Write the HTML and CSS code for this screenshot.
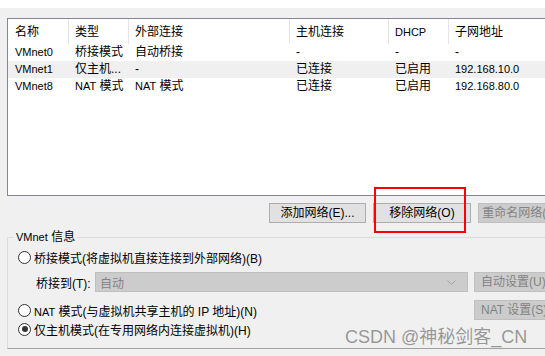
FILE: index.html
```html
<!DOCTYPE html>
<html lang="zh-CN">
<head>
  <meta charset="UTF-8">
  <meta name="viewport" content="width=device-width, initial-scale=1.0">
  <title>虚拟网络编辑器</title>
  <link rel="stylesheet" href="styles.css">
</head>
<body>
  <div class="topbar"></div>

  <div class="list">
    <div class="row head">
      <div class="cell">名称</div>
      <div class="cell">类型</div>
      <div class="cell">外部连接</div>
      <div class="cell">主机连接</div>
      <div class="cell"><span class="lat">DHCP</span></div>
      <div class="cell">子网地址</div>
    </div>
    <div class="row">
      <div class="cell lat">VMnet0</div>
      <div class="cell">桥接模式</div>
      <div class="cell">自动桥接</div>
      <div class="cell">-</div>
      <div class="cell">-</div>
      <div class="cell">-</div>
    </div>
    <div class="row alt">
      <div class="cell lat">VMnet1</div>
      <div class="cell">仅主机...</div>
      <div class="cell">-</div>
      <div class="cell">已连接</div>
      <div class="cell">已启用</div>
      <div class="cell lat">192.168.10.0</div>
    </div>
    <div class="row">
      <div class="cell lat">VMnet8</div>
      <div class="cell"><span class="lat">NAT</span> 模式</div>
      <div class="cell"><span class="lat">NAT</span> 模式</div>
      <div class="cell">已连接</div>
      <div class="cell">已启用</div>
      <div class="cell lat">192.168.80.0</div>
    </div>
  </div>

  <div class="actions">
    <button class="btn">添加网络(E)...</button>
    <button class="btn wide">移除网络(O)</button>
    <button class="btn wide" disabled>重命名网络(W)...</button>
  </div>

  <div class="group">
    <div class="group-title"><span class="lat">VMnet</span> 信息</div>

    <label class="option first">
      <span class="radio"></span>
      <span>桥接模式(将虚拟机直接连接到外部网络)(B)</span>
    </label>

    <div class="bridge">
      <span class="bridge-label">桥接到(T):</span>
      <div class="select">
        <span>自动</span>
        <svg width="9" height="5" viewBox="0 0 9 5"><polyline points="0.5,0.5 4.5,4.5 8.5,0.5" fill="none" stroke="#a3a3a3" stroke-width="1"/></svg>
      </div>
      <button class="btn side" disabled>自动设置(U)...</button>
    </div>

    <div class="option nat">
      <label class="option-text">
        <span class="radio"></span>
        <span><span class="lat">NAT</span> 模式(与虚拟机共享主机的 IP 地址)(N)</span>
      </label>
      <button class="btn side" disabled>NAT 设置(S)...</button>
    </div>

    <label class="option">
      <span class="radio checked"></span>
      <span>仅主机模式(在专用网络内连接虚拟机)(H)</span>
    </label>
  </div>

  <div class="highlight"></div>
  <div class="watermark">CSDN @神秘剑客_CN</div>
</body>
</html>
```

FILE: styles.css
```css
html, body {
  margin: 0;
  padding: 0;
}

body {
  width: 545px;
  height: 356px;
  overflow: hidden;
  position: relative;
  background-color: #f0f0f0;
  font-family: "Liberation Sans", "Noto Sans CJK SC", sans-serif;
  font-size: 12px;
  color: #000;
}

.lat {
  font-size: 11px;
}

.topbar {
  height: 8px;
  background-color: #fff;
}

/* network list */
.list {
  margin: 10px 0 0 7px;
  width: 560px;
  height: 176px;
  background-color: #fff;
  border: 1px solid #828790;
  border-right: none;
}

.row {
  display: grid;
  grid-template-columns: 61px 60px 161px 99px 60px 1fr;
  height: 17px;
  line-height: 17px;
}

.row.head {
  height: 25px;
  line-height: 26px;
}

.row.head .cell {
  border-right: 1px solid #e5e5e5;
}

.row.alt {
  background-color: #f0f0f0;
}

.cell {
  padding-left: 6px;
  white-space: nowrap;
  overflow: hidden;
}

.row .cell:first-child {
  padding-left: 7px;
}

/* buttons */
.btn {
  height: 20px;
  padding: 0;
  font-family: inherit;
  font-size: 12px;
  line-height: 18px;
  color: #000;
  background-color: #e1e1e1;
  border: 1px solid #adadad;
  white-space: nowrap;
  overflow: hidden;
  flex: none;
}

.btn:disabled {
  color: #838383;
  background-color: #cccccc;
  border-color: #bfbfbf;
}

.actions {
  display: flex;
  gap: 7px;
  margin: 7px 0 0 269px;
  width: 320px;
}

.actions .btn {
  width: 97px;
}

.actions .btn.wide {
  width: 98px;
}

/* VMnet info group */
.group {
  margin: 14px 0 0 7px;
  height: 110px;
  border-top: 1px solid #dcdcdc;
  border-left: 1px solid #dcdcdc;
  border-bottom: 1px solid #a0a0a0;
}

.group-title {
  width: fit-content;
  margin: -8px 0 0 6px;
  padding: 0 2px;
  line-height: 14px;
  background-color: #f0f0f0;
}

.option {
  display: flex;
  align-items: center;
  height: 18px;
  padding-left: 10px;
  white-space: nowrap;
}

.option.first {
  margin-top: 4px;
}

.radio {
  width: 11px;
  height: 11px;
  border: 1px solid #333;
  border-radius: 50%;
  background-color: #fff;
  margin-right: 3px;
  flex: none;
  display: flex;
  align-items: center;
  justify-content: center;
}

.radio.checked::after {
  content: "";
  width: 6px;
  height: 6px;
  border-radius: 50%;
  background-color: #333;
}

.bridge {
  display: flex;
  align-items: center;
  height: 20px;
  margin-top: 6px;
  padding-left: 28px;
  width: 600px;
}

.bridge-label {
  width: 59px;
  flex: none;
  white-space: nowrap;
}

.select {
  box-sizing: border-box;
  width: 373px;
  height: 20px;
  flex: none;
  padding: 0 11px 0 4px;
  display: flex;
  align-items: center;
  justify-content: space-between;
  color: #838383;
  background-color: #cccccc;
  border: 1px solid #bfbfbf;
}

.side {
  width: 80px;
  margin-left: 6px;
  text-align: left;
  padding-left: 6px;
}

.option.nat {
  height: 20px;
  margin-top: 8px;
  width: 600px;
}

.option-text {
  display: flex;
  align-items: center;
  width: 456px;
  flex: none;
}

.option.nat .side {
  margin-left: 0;
}

/* annotation overlays */
.highlight {
  position: absolute;
  left: 374px;
  top: 187px;
  width: 88px;
  height: 42px;
  border: 2px solid #ff0000;
}

.watermark {
  position: absolute;
  left: 345px;
  top: 325px;
  font-size: 18px;
  line-height: 24px;
  color: rgba(90, 90, 90, 0.6);
  white-space: nowrap;
}
```
